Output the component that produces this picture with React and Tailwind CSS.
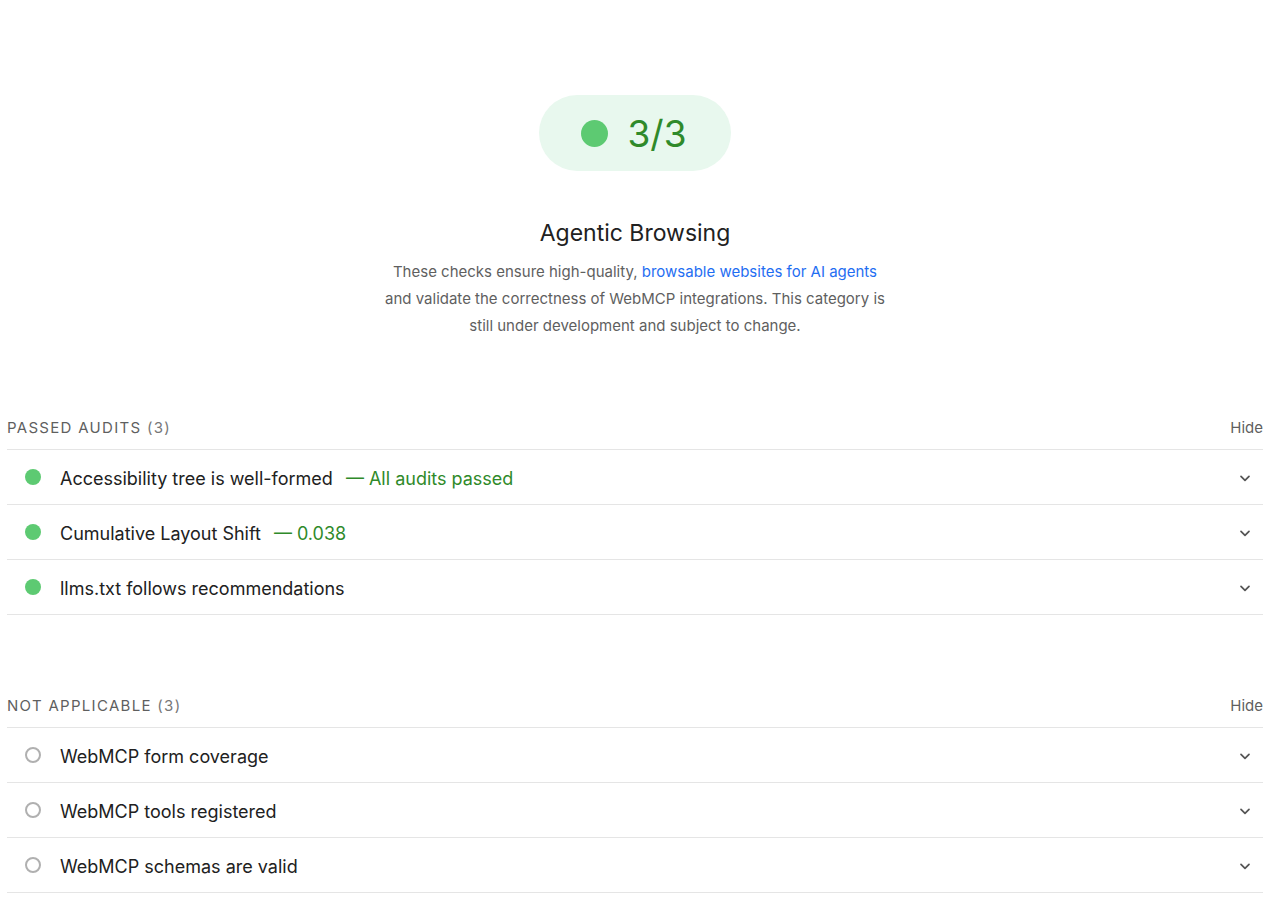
const F = { fontFamily: "Inter, 'Noto Sans', sans-serif" };

function Chevron() {
  return (
    <svg width="16" height="16" viewBox="0 0 14 14" fill="none" stroke="#555" strokeWidth="1.5" strokeLinecap="round" strokeLinejoin="round">
      <path d="M3.5 5.5 L7 9 L10.5 5.5" />
    </svg>
  );
}

function Row({ pass, title, extra }) {
  return (
    <div className="flex items-center h-[55px] border-b border-[#e5e5e5]">
      <div className="w-[53px] flex justify-center pr-[2px]">
        {pass ? (
          <span className="w-[16px] h-[16px] rounded-full bg-[#5dca72]" />
        ) : (
          <span className="w-[16px] h-[16px] rounded-full border-[2.5px] border-[#b0b0b0]" />
        )}
      </div>
      <div className="flex-1 text-[18px] text-[#212121] pt-[2px]">
        {title}
        {extra && <span className="text-[#2f8a2a] ml-[13px]">— {extra}</span>}
      </div>
      <div className="w-[36px] flex justify-center pt-[2px]"><Chevron /></div>
    </div>
  );
}

function Section({ label, rows }) {
  return (
    <div>
      <div className="flex items-center justify-between h-[41px] border-b border-[#e5e5e5] pb-[2px]">
        <span className="text-[15px] tracking-[1.3px] text-[#5f5f5f]">{label} <span className="text-[#777]">(3)</span></span>
        <span className="text-[15px] text-[#5f5f5f]">Hide</span>
      </div>
      {rows.map((r, i) => <Row key={i} {...r} />)}
    </div>
  );
}

export default function App() {
  return (
    <div style={F} className="bg-white min-h-[904px] pl-[7px] pr-[5px] pt-[95px] pb-4">
      <div className="flex flex-col items-center">
        <div className="w-[192px] h-[76px] rounded-full bg-[#e8f8ee] flex items-center justify-center gap-[19px] pr-[2px]">
          <span className="w-[27px] h-[27px] rounded-full bg-[#5dca72]" />
          <span className="text-[37px] text-[#2f8a2a] leading-none">3/3</span>
        </div>
        <h1 className="mt-[47px] text-[23px] text-[#212121] leading-[30px]">Agentic Browsing</h1>
        <p className="mt-[10px] w-[536px] text-center text-[15px] leading-[27px] text-[#5f5f5f]">
          These checks ensure high-quality, <span className="text-[#1f6ef2]">browsable websites for AI agents</span><br />and validate the correctness of WebMCP integrations. This category is<br />still under development and subject to change.
        </p>
      </div>
      <div className="mt-[70px]">
        <Section label="PASSED AUDITS" rows={[
          { pass: true, title: "Accessibility tree is well-formed", extra: "All audits passed" },
          { pass: true, title: "Cumulative Layout Shift", extra: "0.038" },
          { pass: true, title: "llms.txt follows recommendations" },
        ]} />
      </div>
      <div className="mt-[72px]">
        <Section label="NOT APPLICABLE" rows={[
          { title: "WebMCP form coverage" },
          { title: "WebMCP tools registered" },
          { title: "WebMCP schemas are valid" },
        ]} />
      </div>
    </div>
  );
}
